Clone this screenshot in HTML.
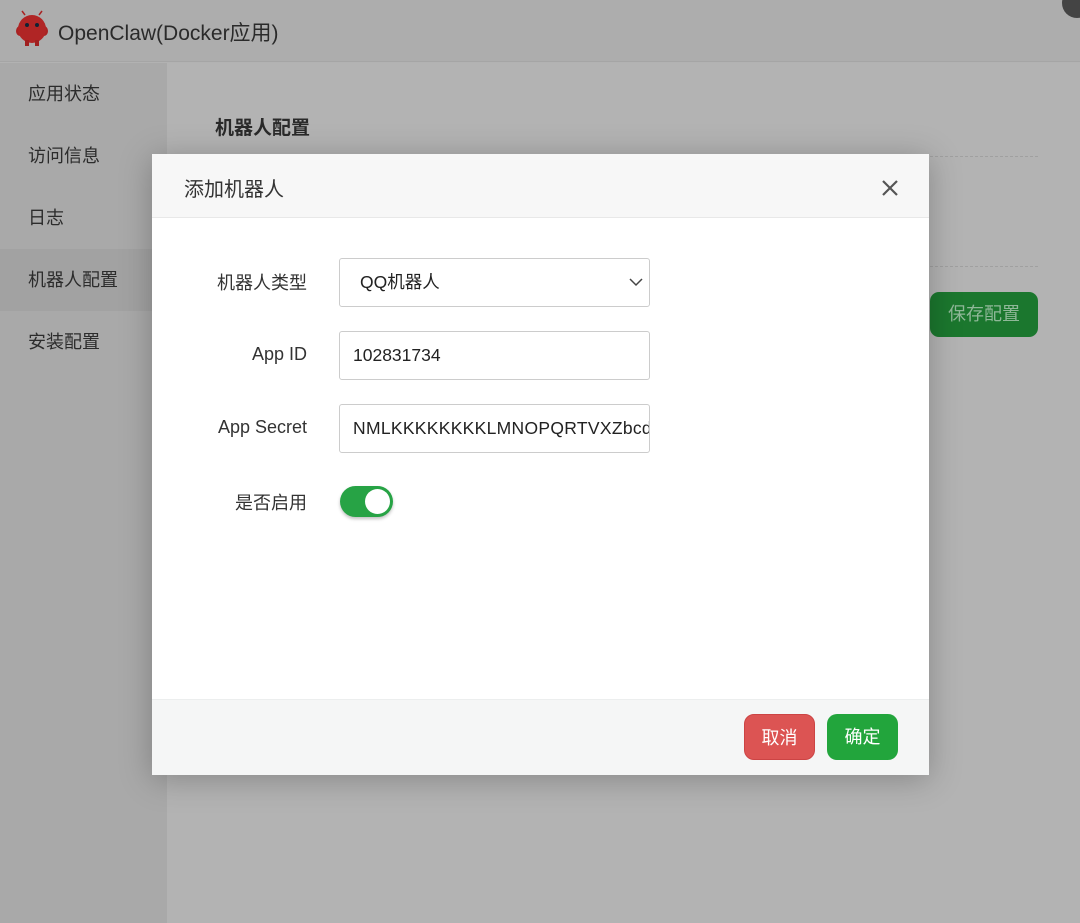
<!DOCTYPE html>
<html><head><meta charset="utf-8"><style>
*{box-sizing:border-box;margin:0;padding:0}
body{width:1080px;height:923px;overflow:hidden;position:relative;background:#b2b2b2;font-family:"Liberation Sans","Noto Sans CJK SC",sans-serif;color:#333}
.hdr{position:absolute;left:0;top:0;width:1080px;height:62px;background:#adadad;border-bottom:1px solid #a5a5a5}
.hdr .t{position:absolute;left:58px;top:17px;font-size:21px;color:#2a2a2a}
.side{position:absolute;left:0;top:63px;width:167px;height:860px;background:#a9a9a9}
.side div{height:62px;line-height:62px;padding-left:28px;font-size:18px;color:#2c2c2c}
.side .a{background:#a2a2a2}
.main{position:absolute;left:167px;top:63px;right:0;bottom:0;background:#b3b3b3}
.h2{position:absolute;left:215px;top:113px;font-size:19px;font-weight:bold;color:#2a2a2a}
.dash{position:absolute;left:930px;width:108px;border-top:1px dashed #a0a0a0}
.save{position:absolute;left:930px;top:292px;width:108px;height:45px;background:#1b772e;border-radius:9px;color:#8fb898;font-size:18px;text-align:center;line-height:45px}
.dlg{position:absolute;left:152px;top:154px;width:777px;height:621px;background:#fff;box-shadow:0 4px 30px rgba(0,0,0,.25)}
.dh{height:64px;background:#f7f7f7;border-bottom:1px solid #e8e8e8;position:relative}
.dh span{position:absolute;left:32px;top:19px;font-size:20px;color:#333}
.df{position:absolute;left:0;bottom:0;width:100%;height:76px;background:#f5f6f6;border-top:1px solid #eceeee}
.lbl{position:absolute;right:622px;font-size:18px;color:#333;text-align:right;white-space:nowrap}
.inp{position:absolute;left:187px;width:311px;height:49px;border:1px solid #ccc;border-radius:3px;font-size:17.5px;line-height:47px;padding-left:13px;overflow:hidden;white-space:nowrap;color:#222}
.btn{position:absolute;top:560px;height:46px;border-radius:10px;color:#fff;font-size:18px;text-align:center;line-height:46px}
</style></head><body>
<div class="hdr">
<svg style="position:absolute;left:12px;top:9px" width="40" height="40" viewBox="0 0 40 40"><line x1="13" y1="6" x2="10" y2="2" stroke="#a22" stroke-width="1.5"/><line x1="27" y1="6" x2="30" y2="2" stroke="#a22" stroke-width="1.5"/><ellipse cx="8" cy="22" rx="4" ry="5" fill="#a82222"/><ellipse cx="32" cy="22" rx="4" ry="5" fill="#a82222"/><circle cx="20" cy="20" r="14" fill="#b02525"/><rect x="13" y="31" width="4" height="6" fill="#a02020"/><rect x="23" y="31" width="4" height="6" fill="#a02020"/><circle cx="15" cy="16" r="2" fill="#123"/><circle cx="25" cy="16" r="2" fill="#123"/></svg>
<div class="t">OpenClaw(Docker应用)</div>
<div style="position:absolute;left:1062px;top:-12px;width:30px;height:30px;border-radius:50%;background:#444"></div>
</div>
<div class="side"><div>应用状态</div><div>访问信息</div><div>日志</div><div class="a">机器人配置</div><div>安装配置</div></div>
<div class="main"></div>
<div class="h2">机器人配置</div>
<div class="dash" style="top:156px"></div>
<div class="dash" style="top:266px"></div>
<div class="save">保存配置</div>
<div class="dlg">
<div class="dh"><span>添加机器人</span>
<svg style="position:absolute;left:729px;top:25px" width="18" height="18" viewBox="0 0 18 18"><path d="M2 2L16 16M16 2L2 16" stroke="#555" stroke-width="2.2"/></svg></div>
<div class="lbl" style="top:115px">机器人类型</div>
<div class="inp" style="top:104px;padding-left:20px">QQ机器人
<svg style="position:absolute;right:6px;top:19px" width="14" height="9" viewBox="0 0 14 9"><path d="M1 1L7 7L13 1" stroke="#444" stroke-width="1.5" fill="none"/></svg></div>
<div class="lbl" style="top:190px">App ID</div>
<div class="inp" style="top:177px">102831734</div>
<div class="lbl" style="top:263px">App Secret</div>
<div class="inp" style="top:250px;letter-spacing:0.3px">NMLKKKKKKKKLMNOPQRTVXZbcd</div>
<div class="lbl" style="top:335px">是否启用</div>
<div style="position:absolute;left:188px;top:332px;width:53px;height:31px;border-radius:16px;background:#27a345;box-shadow:0 2px 3px rgba(0,0,0,.25)"><div style="position:absolute;right:3px;top:3px;width:25px;height:25px;border-radius:50%;background:#fff"></div></div>
<div class="df"></div>
<div class="btn" style="left:592px;width:71px;background:#dc5453;border:1px solid #cc4444">取消</div>
<div class="btn" style="left:675px;width:71px;background:#22a53c">确定</div>
</div>
</body></html>
